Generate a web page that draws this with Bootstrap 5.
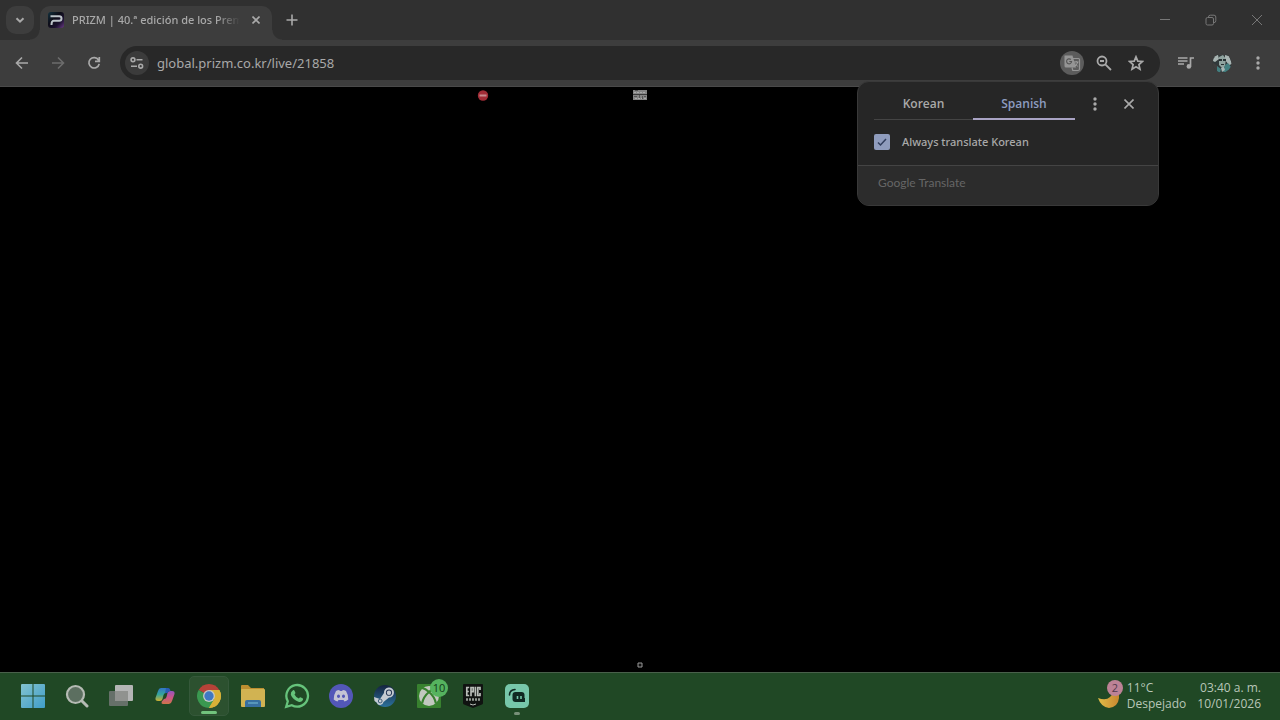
<!DOCTYPE html>
<html lang="es">
<head>
<meta charset="utf-8">
<meta name="viewport" content="width=device-width, initial-scale=1">
<title>PRIZM | 40.ª edición de los Premios</title>
<link href="https://cdn.jsdelivr.net/npm/bootstrap@5.3.0/dist/css/bootstrap.min.css" rel="stylesheet">
<style>
  body { font-family: "Open Sans", "Noto Sans", sans-serif; font-size: 12px; line-height: 16px; background: #000; color: #a9a9a9; }
  svg { display: block; flex: none; }
  button { border: 0; padding: 0; background: none; color: inherit; display: flex; align-items: center; justify-content: center; flex: none; }
  .tabstrip { height: 40px; background: #303030; padding-left: 6px; }
  .tab-search { width: 28px; height: 28px; border-radius: 10px; background: #3d3d3d; }
  .page-tab { position: relative; width: 232px; height: 34px; margin: 6px 0 0 6px; padding: 0 8px 6px; border-radius: 10px 10px 0 0; background: #3d3d3d; }
  .page-tab::before, .page-tab::after { content: ""; position: absolute; bottom: 0; width: 10px; height: 10px; }
  .page-tab::before { left: -10px; background: radial-gradient(circle at 0 0, transparent 9px, #3d3d3d 10px); }
  .page-tab::after { right: -10px; background: radial-gradient(circle at 100% 0, transparent 9px, #3d3d3d 10px); }
  .tab-title { font-family: "Noto Sans", sans-serif; font-size: 11px; font-weight: 500; margin-left: 8px; width: 168px; white-space: nowrap; overflow: hidden; -webkit-mask-image: linear-gradient(90deg, #000 86%, transparent); mask-image: linear-gradient(90deg, #000 86%, transparent); }
  .tab-close { width: 16px; height: 16px; margin-left: auto; }
  .new-tab { width: 28px; height: 28px; margin-left: 6px; }
  .win-btn { width: 46px; height: 40px; color: #777; }
  .toolbar { height: 47px; background: #3d3d3d; padding: 0 4px; border-bottom: 1px solid #4a4a4a; }
  .tool-btn { width: 36px; height: 36px; }
  .tool-btn:disabled { color: #6c6c6c; }
  .omnibox { height: 34px; border-radius: 17px; background: #282828; margin: 0 8px; padding: 0 12px 0 5px; }
  .round-chip { width: 24px; height: 24px; border-radius: 50%; background: #3b3b3b; }
  .translate-chip { background: #5c5c5c; color: #959595; }
  .address { border: 0; outline: 0; background: none; color: #a9a9a9; font-family: "Noto Sans", sans-serif; font-size: 13px; line-height: 20px; padding: 0; margin-left: 8px; }
  .omni-btn { width: 24px; height: 24px; margin-left: 8px; }
  .viewport { background: #000; }
  .blocked, .tiny-image { position: absolute; }
  .blocked { top: 3px; left: 37.75%; transform: translateX(-50%); }
  .tiny-image { left: 50%; transform: translateX(-50%); }
  .bubble { position: absolute; top: 81px; right: 121px; width: 302px; z-index: 5; border: 1px solid #393939; border-radius: 12px; background: #262626; overflow: hidden; }
  .lang-tabs { padding: 7px 0 0 16px; }
  .lang-btn { height: 31px; border-bottom: 1px solid #444; width: 99px; font-weight: 600; }
  .lang-btn.selected { width: 102px; border-bottom: 2px solid #a9a3c4; color: #8d9cc0; }
  .bubble-menu { padding-left: 3px; }
  .bubble-btn { width: 34px; height: 30px; }
  .always { padding: 14px 16px 15px; }
  .always label { font-family: "Noto Sans", sans-serif; font-size: 11px; font-weight: 500; }
  .always .form-check-input { width: 16px; height: 16px; margin: 0 12px 0 0; border: 0; border-radius: 2px; background-color: #8f9cbd; background-size: 14px; background-image: url("data:image/svg+xml,%3Csvg xmlns='http://www.w3.org/2000/svg' viewBox='0 0 14 14'%3E%3Cpath d='M3 7.5l2.500 2.500L11 4' fill='none' stroke='%23303d5c' stroke-width='1.5'/%3E%3C/svg%3E"); }
  .brand-line { height: 40px; padding: 9px 20px; background: #2c2c2c; border-top: 1px solid #444; color: #666; font-family: Lato, sans-serif; }
  .taskbar { height: 48px; background: #204825; border-top: 1px solid #49604b; padding: 0 19px 2px 13px; color: #b8c6b8; }
  .task-item { position: relative; width: 40px; height: 40px; margin-right: 4px; border-radius: 5px; }
  .task-item.current { background: #2c512f; border: 1px solid #35583a; }
  .task-item.current::after, .task-item.running::after { content: ""; position: absolute; bottom: 1px; left: 50%; transform: translateX(-50%); width: 16px; height: 3px; border-radius: 2px; background: #72c47d; }
  .task-item.running::after { width: 6px; background: #789079; }
  .count { position: absolute; top: 3px; right: 1px; width: 18px; height: 18px; border-radius: 50%; background: #55b35e; color: #123b19; font-size: 11px; line-height: 18px; text-align: center; }
  .weather { text-align: left; }
  .weather-icon { position: relative; width: 28px; height: 32px; margin-right: 2px; }
  .weather-icon .count { top: 0; right: 2px; width: 16px; height: 16px; line-height: 16px; background: #bd8296; color: #52384b; }
  .clock { text-align: right; margin-left: 11px; }
</style>
</head>
<body class="vh-100 d-flex flex-column overflow-hidden position-relative">
<header>
  <div class="tabstrip d-flex align-items-center">
    <button class="tab-search" aria-label="Buscar pestañas"><svg width="10" height="10" viewBox="0 0 10 10" fill="none" stroke="currentColor" stroke-width="2"><path d="M1.500 3.200L5 6.700l3.500-3.500"/></svg></button>
    <div class="page-tab d-flex align-items-center">
      <svg width="16" height="16" viewBox="0 0 16 16"><defs><linearGradient id="pz" x2="1" y2="1"><stop offset="0" stop-color="#12323f"/><stop offset=".4" stop-color="#0d0d18"/><stop offset=".7" stop-color="#1c1230"/><stop offset="1" stop-color="#6b3a86"/></linearGradient></defs><rect width="16" height="16" rx="3" fill="url(#pz)"/><path d="M2.500 4.300h8.700q2.300 0 2.300 2.200t-2.300 2.300H5.500Q3.500 9 3.500 13" fill="none" stroke="#bcc3c9" stroke-width="2"/></svg>
      <span class="tab-title">PRIZM | 40.ª edición de los Premios</span>
      <button class="tab-close" aria-label="Cerrar pestaña"><svg width="8" height="8" viewBox="0 0 8 8" stroke="currentColor" stroke-width="1.600"><path d="M.5.5l7 7M7.500.5l-7 7"/></svg></button>
    </div>
    <button class="new-tab" aria-label="Nueva pestaña"><svg width="12" height="12" viewBox="0 0 12 12" stroke="currentColor" stroke-width="1.600"><path d="M6 .5v11M.5 6h11"/></svg></button>
    <div class="d-flex ms-auto">
      <button class="win-btn" aria-label="Minimizar"><svg width="12" height="12" viewBox="0 0 12 12" stroke="currentColor"><path d="M1 5.500h10"/></svg></button>
      <button class="win-btn" aria-label="Restaurar"><svg width="12" height="12" viewBox="0 0 12 12" fill="none" stroke="currentColor"><rect x="1" y="3.500" width="7.500" height="7.500" rx="1.500"/><path d="M3.500 3.200V3A1.800 1.800 0 0 1 5.300 1.200H9A1.800 1.800 0 0 1 10.800 3v3.800A1.800 1.800 0 0 1 9 8.600"/></svg></button>
      <button class="win-btn" aria-label="Cerrar"><svg width="12" height="12" viewBox="0 0 12 12" stroke="currentColor"><path d="M1 1l10 10M11 1L1 11"/></svg></button>
    </div>
  </div>
  <div class="toolbar d-flex align-items-center">
    <button class="tool-btn" aria-label="Atrás"><svg width="14" height="14" viewBox="0 0 14 14" fill="none" stroke="currentColor" stroke-width="1.600"><path d="M13 7H2M7 1.500L1.500 7 7 12.500"/></svg></button>
    <button class="tool-btn" disabled aria-label="Adelante"><svg width="14" height="14" viewBox="0 0 14 14" fill="none" stroke="currentColor" stroke-width="1.600"><path d="M1 7h11M7 1.500L12.500 7 7 12.500"/></svg></button>
    <button class="tool-btn" aria-label="Recargar"><svg width="14" height="14" viewBox="0 0 14 14" fill="none" stroke="currentColor" stroke-width="1.700"><path d="M11.500 4A5.200 5.200 0 1 0 12.200 7.800M12.300 1v4.300H8"/></svg></button>
    <div class="omnibox d-flex align-items-center flex-grow-1">
      <button class="round-chip" aria-label="Información del sitio"><svg width="14" height="12" viewBox="0 0 14 12" fill="none" stroke="currentColor" stroke-width="1.600"><circle cx="3" cy="2.800" r="1.900"/><path d="M6.500 2.800h6M1 9.200h6"/><circle cx="10.700" cy="9.200" r="1.900"/></svg></button>
      <input class="address flex-grow-1" type="text" value="global.prizm.co.kr/live/21858" aria-label="Dirección">
      <button class="round-chip translate-chip" aria-label="Traducir esta página"><svg width="18" height="18" viewBox="0 0 18 18" fill="none"><path d="M1.500 1.500h8l3.500 12H3a1.500 1.500 0 0 1-1.500-1.500z" fill="#959595"/><path d="M10 4.500h5.500a1 1 0 0 1 1 1V15a1.500 1.500 0 0 1-1.500 1.500H9.800L9 13.500" stroke="#959595" stroke-width="1.200"/><path d="M7.800 5.500a2.500 2.500 0 1 0 .8 2H6.300" stroke="#555" stroke-width="1.100"/><path d="M11 8h4.500M13.200 7v1M14.700 8q-.7 3-3 4.300M12.200 9.500l2.500 3" stroke="#a0a0a0"/></svg></button>
      <button class="omni-btn" aria-label="Zoom"><svg width="16" height="16" viewBox="0 0 16 16" fill="none" stroke="currentColor" stroke-width="1.800"><circle cx="6" cy="6" r="4.500"/><path d="M9.300 9.300L15 15M4 6h4"/></svg></button>
      <button class="omni-btn" aria-label="Añadir a marcadores"><svg width="16" height="16" viewBox="0 0 16 16" fill="none" stroke="currentColor" stroke-width="1.700"><path d="M8 1.800l1.800 4.300 4.700.4-3.600 3.100 1.100 4.600L8 11.800l-4 2.400 1.100-4.600-3.600-3.100 4.700-.4z"/></svg></button>
    </div>
    <button class="tool-btn" aria-label="Controles multimedia"><svg width="16" height="14" viewBox="0 0 16 14" fill="none" stroke="currentColor" stroke-width="1.700"><path d="M0 2h9.500M0 5h9.500M0 8h6M12.500 10.500V2H16"/><circle cx="10.900" cy="10.400" r="2.300" fill="currentColor" stroke="none"/></svg></button>
    <button class="tool-btn" aria-label="Perfil"><svg width="20" height="20" viewBox="0 0 20 20"><defs><clipPath id="av"><circle cx="10" cy="10" r="9.500"/></clipPath></defs><g clip-path="url(#av)"><path fill="#30383a" d="M0 0h20v20H0z"/><path fill="#3e3e3e" d="M0 9l6 4 1 7H0zM0 0h20v2H0z"/><path fill="#a8b4b2" d="M1 3l5-1 1 4-4 3-2-1zM13 2l4 1 3 8-3 1-4-5z"/><path fill="#8fa39f" d="M7 4l4-2 3 4-1 7-2 3-4-4z"/><path fill="#263032" d="M7 6h3v2H7zM11 6h3v2h-3zM9 11h3v1H9z"/><path fill="#437f80" d="M13 12l3-2 3 4-3 5h-5zM5 13l4 3-1 4H5z"/><path fill="#a7b6b5" d="M9 15l3-1 1 3-3 2z"/></g></svg></button>
    <button class="tool-btn" aria-label="Menú"><svg width="4" height="14" viewBox="0 0 4 14" fill="currentColor"><circle cx="2" cy="2" r="1.700"/><circle cx="2" cy="7" r="1.700"/><circle cx="2" cy="12" r="1.700"/></svg></button>
  </div>
</header>

<section class="bubble" aria-label="Traductor">
  <div class="lang-tabs d-flex">
    <button class="lang-btn">Korean</button>
    <button class="lang-btn selected">Spanish</button>
    <div class="bubble-menu d-flex">
      <button class="bubble-btn" aria-label="Opciones"><svg width="4" height="14" viewBox="0 0 4 14" fill="currentColor"><circle cx="2" cy="2" r="1.700"/><circle cx="2" cy="7" r="1.700"/><circle cx="2" cy="12" r="1.700"/></svg></button>
      <button class="bubble-btn" aria-label="Cerrar"><svg width="10" height="10" viewBox="0 0 10 10" stroke="currentColor" stroke-width="1.600"><path d="M.5.5l9 9M9.500.5l-9 9"/></svg></button>
    </div>
  </div>
  <div class="always d-flex align-items-center">
    <input class="form-check-input" type="checkbox" id="always" checked><label for="always">Always translate Korean</label>
  </div>
  <div class="brand-line">Google Translate</div>
</section>

<main class="viewport flex-grow-1 position-relative">
  <svg class="blocked" width="11" height="11" viewBox="0 0 11 11"><circle cx="5.500" cy="5.500" r="5.200" fill="#a02c36"/><path d="M2 5.500h7" stroke="#c58a8d" stroke-width="1.800"/></svg>
  <svg class="tiny-image" style="top:3px" width="14" height="10" viewBox="0 0 14 10"><path fill="#858585" d="M0 0h14v10H0z"/><path stroke="#3b3b3b" d="M0 4.500h14"/><path stroke="#aaa" stroke-dasharray="2 1" d="M1 2.500h12M2 8.500h11"/><path stroke="#555" d="M1 6.500h3M6.500 5v3M9.500 6v3M11 6.500h2M2 .5h3"/></svg>
  <svg class="tiny-image" style="bottom:4px" width="6" height="6" viewBox="0 0 6 6"><path d="M1 1h4v4H1z" fill="#111" stroke="#999"/></svg>
</main>

<footer class="taskbar d-flex align-items-center">
  <button class="task-item" aria-label="Inicio"><svg width="24" height="24" viewBox="0 0 24 24"><defs><linearGradient id="wn" x2="1" y2="1"><stop stop-color="#83c3cf"/><stop offset="1" stop-color="#3f9dc9"/></linearGradient></defs><path fill="url(#wn)" d="M1 0h10.500v11.500H0V1a1 1 0 0 1 1-1zM12.500 0H23a1 1 0 0 1 1 1v10.500H12.500zM0 12.500h11.500V24H1a1 1 0 0 1-1-1zM12.500 12.500H24V23a1 1 0 0 1-1 1H12.500z"/></svg></button>
  <button class="task-item" aria-label="Buscar"><svg width="24" height="24" viewBox="0 0 24 24" fill="none" stroke="#b5bbb4"><circle cx="10.500" cy="10.500" r="8.500" fill="#5c6f60" stroke-width="2.200"/><path d="M17 17l5 5" stroke-width="3" stroke-linecap="round"/></svg></button>
  <button class="task-item" aria-label="Vista de tareas"><svg width="26" height="24" viewBox="0 0 26 24"><rect x="1" y="7" width="19" height="15" rx="1" fill="#667069"/><rect x="7" y="1" width="18" height="16" rx="1" fill="#b4b5b5"/><path fill="#90928f" d="M7 7h13v10H7z"/></svg></button>
  <button class="task-item" aria-label="Copilot"><svg width="20" height="20" viewBox="0 0 20 20"><defs><linearGradient id="c1" x2="0" y2="1"><stop stop-color="#3275c4"/><stop offset=".5" stop-color="#35a59c"/><stop offset="1" stop-color="#cfb02f"/></linearGradient><linearGradient id="c2" x2="0" y2="1"><stop stop-color="#9455bd"/><stop offset=".5" stop-color="#cb5587"/><stop offset="1" stop-color="#cf7549"/></linearGradient></defs><path fill="url(#c1)" d="M6 2h6q2 0 1.200 2.500L11 7Q9 7 8.500 9L7.500 13Q7 15 5 15H3q-3 0-2.500-3L3 5q.8-3 3-3z"/><path fill="url(#c2)" d="M14 18H8q-2 0-1.200-2.500L9 13q2 0 2.500-2l1-4Q13 5 15 5h2q3 0 2.500 3L17 15q-.8 3-3 3z"/><path fill="#285cb5" d="M11 2h2q2 0 2.500 3-2.500 0-3 2H10z"/></svg></button>
  <button class="task-item current" aria-label="Google Chrome"><svg width="26" height="26" viewBox="0 0 24 24"><path fill="#b64238" d="M12 12L2.450 6.500a11 11 0 0 1 19.100 0z"/><path fill="#d8b138" d="M12 12l9.550-5.500A11 11 0 0 1 12 23z"/><path fill="#3a9850" d="M12 12l4.800 3L12 23A11 11 0 0 1 2.450 6.500z"/><path fill="#d8b138" d="M12 6.500h9.550A11 11 0 0 1 12 23l4.800-8z"/><circle cx="12" cy="12" r="5.500" fill="#c5c9c7"/><circle cx="12" cy="12" r="4.300" fill="#3f78c3"/></svg></button>
  <button class="task-item" aria-label="Explorador de archivos"><svg width="26" height="24" viewBox="0 0 26 24"><path fill="#bc8e30" d="M1 2a1 1 0 0 1 1-1h6l3 3h13v6H1z"/><rect x="1" y="5" width="24" height="18" rx="1" fill="#d1b352"/><path fill="#376fa0" d="M5 23v-5a2 2 0 0 1 2-2h12a2 2 0 0 1 2 2v5z"/><path fill="#5796ba" d="M8 18h10v2H8z"/></svg></button>
  <button class="task-item" aria-label="WhatsApp"><svg width="26" height="26" viewBox="0 0 26 26" fill="none" stroke="#66c37b"><path stroke-width="2.300" d="M2.200 23.800l1.600-5.600a10.800 10.800 0 1 1 4 4z"/><path fill="#66c37b" stroke="none" d="M9 7.200q.8-.5 1.400.4l1 2.200q.2.600-.9 1.700 1.400 2.900 4.300 4 1.200-1.500 1.700-1.300l2.400 1.200q.5.400 0 1.700-1.600 2.500-4.500 1.600-5.500-1.700-7.600-6.900-.4-3 2.200-4.600z"/></svg></button>
  <button class="task-item" aria-label="Discord"><svg width="24" height="24" viewBox="0 0 24 24"><circle cx="12" cy="12" r="12" fill="#5357b8"/><path fill="#c4c4d4" d="M7 7q1.500-1 3.300-1l.5 1h2.400l.5-1Q15.500 6 17 7q2.500 4 2.300 8.500Q17.500 17 15.500 17.500l-1-1.600h-5l-1 1.600Q6.500 17 4.700 15.500 4.500 11 7 7z"/><ellipse cx="9.500" cy="12.200" rx="1.500" ry="1.700" fill="#5357b8"/><ellipse cx="14.500" cy="12.200" rx="1.500" ry="1.700" fill="#5357b8"/></svg></button>
  <button class="task-item" aria-label="Steam"><svg width="24" height="24" viewBox="0 0 24 24"><defs><linearGradient id="st" x2="0" y2="1"><stop stop-color="#15233e"/><stop offset="1" stop-color="#2c719b"/></linearGradient></defs><circle cx="12" cy="12" r="11" fill="url(#st)"/><path fill="#c5cbd2" d="M1 13l6 2 4-6a5 5 0 1 1 5 4.500L10.500 18a3.500 3.500 0 0 1-6.800.4L1.500 17z"/><circle cx="16" cy="8.700" r="3.100" fill="#203252"/><circle cx="16" cy="8.700" r="2.200" fill="#c5cbd2"/><circle cx="7.200" cy="17" r="1.900" fill="none" stroke="#3c5c7a"/></svg></button>
  <button class="task-item" aria-label="Xbox, 10 notificaciones"><svg width="24" height="24" viewBox="0 0 24 24"><rect width="24" height="24" rx="1" fill="#38812f"/><circle cx="12" cy="12" r="10" fill="#c2c8bf"/><path d="M5 4q3.500.5 7 4 3.500-3.500 7-4M12 8Q6.500 12.500 5 19.500M12 8q5.500 4.500 7 11.500" fill="none" stroke="#38812f" stroke-width="2.200"/></svg><span class="count">10</span></button>
  <button class="task-item" aria-label="Epic Games"><svg width="20" height="24" viewBox="0 0 20 24"><path fill="#101311" d="M1 0h18a1 1 0 0 1 1 1v18q0 1-1 1.500L10 24l-9-3.500q-1-.5-1-1.500V1a1 1 0 0 1 1-1z"/><g fill="none" stroke="#b8bdb8" stroke-width="1.700"><path d="M6.200 3.500H3.800v8h2.400M3.800 7.500h2M8 12.300V3.500h2.200v4.200H8M12.400 2.700v9.600M17 6V3.500h-2.200v8H17V9"/></g><path d="M3 15.500h14" stroke="#929a93" stroke-width="2.500" stroke-dasharray="2 1"/><path d="M7 20l3 1 3-1" stroke="#b8bdb8" fill="none"/></svg></button>
  <button class="task-item running" aria-label="Streamlabs"><svg width="24" height="24" viewBox="0 0 24 24"><rect width="24" height="24" rx="5" fill="#77c7aa"/><rect x="7.500" y="8" width="12" height="10" rx="3" fill="#102922"/><path fill="#102922" d="M15 14h5v4h-5z"/><path d="M4.500 11q0-5 5.500-5.500" fill="none" stroke="#102922" stroke-width="1.600" stroke-linecap="round"/><path d="M12.500 12v3M16 12v3" stroke="#77c7aa" stroke-width="1.600"/></svg></button>
  <button class="weather ms-auto"><span class="weather-icon"><svg width="28" height="32" viewBox="0 0 28 32"><defs><linearGradient id="mn" x2="1" y2="0"><stop stop-color="#e0bd48"/><stop offset="1" stop-color="#c8862f"/></linearGradient></defs><path fill="url(#mn)" d="M1 18q8 3 12-1 4-3 3-9 7 2 6 10-1 9-10 10Q4 27 1 18z"/></svg><span class="count">2</span></span><span>11°C<br>Despejado</span></button>
  <button class="clock"><span>03:40 a. m.<br>10/01/2026</span></button>
</footer>
<script src="https://cdn.jsdelivr.net/npm/bootstrap@5.3.0/dist/js/bootstrap.bundle.min.js"></script>
</body>
</html>
